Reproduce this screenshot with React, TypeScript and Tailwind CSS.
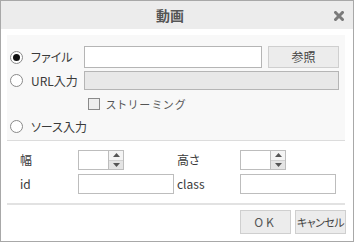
import React from "react"

const font = "font-['Noto_Sans_CJK_JP','Liberation_Sans',sans-serif] [font-feature-settings:'palt']"

function Radio({ checked }: { checked?: boolean }) {
  return (
    <div className="w-[13px] h-[13px] rounded-full border border-[#8a8a8a] bg-white flex items-center justify-center">
      {checked && <div className="w-[7px] h-[7px] rounded-full bg-[#111]" />}
    </div>
  )
}

function Spinner() {
  return (
    <div className="flex h-[20px] w-[46px] border border-[#bdbdbd] bg-white">
      <div className="flex-1" />
      <div className="w-[15px] flex flex-col border-l border-[#bdbdbd]">
        <div className="flex-1 flex items-center justify-center bg-[#f4f4f4]">
          <svg width="7" height="4" viewBox="0 0 7 4">
            <path d="M0 4 L3.5 0 L7 4 Z" fill="#555" />
          </svg>
        </div>
        <div className="flex-1 flex items-center justify-center bg-[#e4e4e4] border-t border-[#d0d0d0]">
          <svg width="7" height="4" viewBox="0 0 7 4">
            <path d="M0 0 L3.5 4 L7 0 Z" fill="#555" />
          </svg>
        </div>
      </div>
    </div>
  )
}

export default function App() {
  return (
    <div className={`w-[354px] h-[242px] border border-[#a8a8a8] bg-white flex flex-col text-[12px] text-[#3a3a3a] ${font}`}>
      {/* header */}
      <div className="h-[28px] bg-[#ececec] relative flex items-center justify-center">
        <span className="text-[14px] font-bold text-[#555] -ml-[14px] leading-none">動画</span>
        <svg className="absolute right-[9px] top-[10px]" width="10" height="10" viewBox="0 0 10 10">
          <path d="M1.5 1.5 L8.5 8.5 M8.5 1.5 L1.5 8.5" stroke="#7a7a7a" strokeWidth="3" strokeLinecap="square" />
        </svg>
      </div>

      {/* source panel */}
      <div className="mt-[6px] ml-[6px] w-[338px] bg-[#f8f8f8] border-b border-[#dcdcdc] pt-[11px] pb-[7px] flex flex-col">
        <div className="flex items-center h-[22px]">
          <div className="w-[77px] flex items-center pl-[3px] gap-[8px]">
            <Radio checked />
            <span>ファイル</span>
          </div>
          <div className="w-[178px] h-[22px] border border-[#b5b5b5] bg-white" />
          <div className="ml-[6px] w-[71px] h-[22px] border border-[#cfcfcf] bg-[#ececec] flex items-center justify-center text-[#444]">
            参照
          </div>
        </div>
        <div className="flex items-center h-[19px] mt-[3px]">
          <div className="w-[77px] flex items-center pl-[3px] gap-[8px]">
            <Radio />
            <span>URL入力</span>
          </div>
          <div className="w-[255px] h-[19px] border border-[#b5b5b5] bg-[#e8e8e8]" />
        </div>
        <div className="flex items-center h-[12px] mt-[8px] pl-[81px] gap-[6px]">
          <div className="w-[12px] h-[12px] border border-[#8a8a8a] bg-[#eeeeee]" />
          <span className="text-[11px] tracking-[2px] text-[#555]">ストリーミング</span>
        </div>
        <div className="flex items-center h-[13px] mt-[10px] pl-[3px] gap-[8px]">
          <Radio />
          <span>ソース入力</span>
        </div>
      </div>

      {/* size / attributes */}
      <div className="pt-[9px] pl-[19px] flex flex-col gap-[4px]">
        <div className="flex items-center h-[20px]">
          <span className="w-[58px]">幅</span>
          <div className="w-[99px]">
            <Spinner />
          </div>
          <span className="w-[63px]">高さ</span>
          <Spinner />
        </div>
        <div className="flex items-center h-[20px]">
          <span className="w-[58px]">id</span>
          <div className="w-[99px]">
            <div className="w-[96px] h-[20px] border border-[#bdbdbd] bg-white" />
          </div>
          <span className="w-[63px]">class</span>
          <div className="w-[96px] h-[20px] border border-[#bdbdbd] bg-white" />
        </div>
      </div>

      <div className="mt-[9px] ml-[6px] w-[338px] h-[2px] bg-[#e2e2e2]" />

      {/* buttons */}
      <div className="mt-[5px] pl-[239px] flex gap-[4px]">
        <div className="w-[51px] h-[24px] border border-[#cfcfcf] bg-[#ececec] flex items-center justify-center tracking-[3px] text-[#555]">
          OK
        </div>
        <div className="w-[51px] h-[24px] border border-[#cfcfcf] bg-[#ececec] flex items-center justify-center text-[#444] text-[11px] whitespace-nowrap tracking-[-0.5px] overflow-hidden">
          キャンセル
        </div>
      </div>
    </div>
  )
}
